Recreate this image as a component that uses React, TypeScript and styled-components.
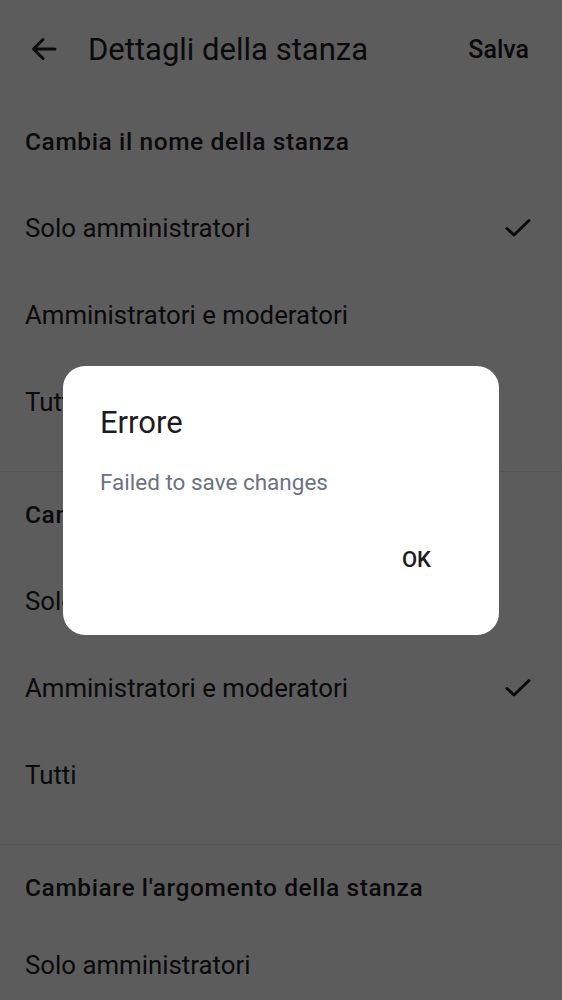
import React from "react";
import styled, { createGlobalStyle } from "styled-components";

const Global = createGlobalStyle`
  html, body { margin: 0; padding: 0; background: #ffffff; }
  body { font-family: Roboto, "Noto Sans", "Liberation Sans", sans-serif; color: #1d1b20; }
  * { box-sizing: border-box; }
`;

const Page = styled.div`
  width: 562px;
  height: 1000px;
  overflow: hidden;
  background: #ffffff;
  display: flex;
  flex-direction: column;
`;

const Header = styled.header`
  height: 98px;
  flex: none;
  display: flex;
  align-items: center;
  padding: 0 33px 0 30px;
`;

const BackButton = styled.button`
  border: 0;
  background: none;
  padding: 0;
  width: 28px;
  height: 28px;
  display: flex;
  align-items: center;
  justify-content: center;
  color: #1d1b20;
  margin-right: 30px;
`;

const Title = styled.h1`
  margin: 0;
  flex: 1;
  font-size: 31px;
  font-weight: 400;
  line-height: 1;
  color: #1d1b20;
`;

const SaveButton = styled.span`
  font-size: 25px;
  font-weight: 500;
  color: #1d1b20;
`;

const Section = styled.section<{ $last?: boolean }>`
  display: flex;
  flex-direction: column;
  padding-bottom: ${(p) => (p.$last ? 0 : 26)}px;
  border-bottom: ${(p) => (p.$last ? "none" : "1px solid #e9e9e9")};
`;

const SectionTitle = styled.div<{ $h: number; $top: number }>`
  height: ${(p) => p.$h}px;
  display: flex;
  align-items: center;
  padding: ${(p) => p.$top}px 25px 0;
  font-size: 24.5px;
  font-weight: 500;
  letter-spacing: 0.6px;
  color: #1d1b20;
`;

const Row = styled.div`
  height: 87px;
  display: flex;
  align-items: center;
  justify-content: space-between;
  padding: 0 31px 0 25px;
  font-size: 25.8px;
  font-weight: 400;
  color: #1d1b20;
`;

const Scrim = styled.div`
  position: fixed;
  inset: 0;
  background: rgba(0, 0, 0, 0.64);
  display: flex;
  align-items: center;
  justify-content: center;
`;

const Dialog = styled.div`
  width: 436px;
  height: 269px;
  background: #ffffff;
  border-radius: 22px;
  padding: 38px 37px 0 37px;
  display: flex;
  flex-direction: column;
`;

const DialogTitle = styled.h2`
  margin: 0;
  font-size: 31px;
  font-weight: 400;
  line-height: 37px;
  color: #1d1b20;
`;

const DialogText = styled.p`
  margin: 26px 0 0;
  font-size: 22.5px;
  line-height: 30px;
  color: #6b7280;
`;

const Actions = styled.div`
  display: flex;
  justify-content: flex-end;
  margin-top: 39px;
  margin-right: 15px;
`;

const TextButton = styled.button`
  border: 0;
  background: none;
  height: 48px;
  padding: 0 16px;
  font-family: inherit;
  font-size: 22px;
  font-weight: 500;
  color: #1d1b20;
`;

const BackIcon = () => (
  <svg width="28" height="28" viewBox="0 0 28 28" fill="none">
    <path
      d="M25 14H4.5M13 4.5L3.5 14L13 23.5"
      stroke="currentColor"
      strokeWidth="3"
      strokeLinecap="round"
      strokeLinejoin="round"
    />
  </svg>
);

const Check = () => (
  <svg width="26" height="20" viewBox="0 0 26 20" fill="none">
    <path
      d="M2 10.5L9 17L24 2.5"
      stroke="#1d1b20"
      strokeWidth="3"
      strokeLinecap="round"
      strokeLinejoin="round"
    />
  </svg>
);

type Group = {
  title: string;
  h: number;
  top: number;
  selected: number;
  options: string[];
};

const groups: Group[] = [
  {
    title: "Cambia il nome della stanza",
    h: 86,
    top: 0,
    selected: 0,
    options: ["Solo amministratori", "Amministratori e moderatori", "Tutti"],
  },
  {
    title: "Cambiare l'avatar della stanza",
    h: 85,
    top: 0,
    selected: 1,
    options: ["Solo amministratori", "Amministratori e moderatori", "Tutti"],
  },
  {
    title: "Cambiare l'argomento della stanza",
    h: 76,
    top: 8,
    selected: -1,
    options: ["Solo amministratori"],
  },
];

export default function App() {
  return (
    <>
      <Global />
      <Page>
        <Header>
          <BackButton aria-label="Indietro">
            <BackIcon />
          </BackButton>
          <Title>Dettagli della stanza</Title>
          <SaveButton>Salva</SaveButton>
        </Header>
        {groups.map((g, gi) => (
          <Section key={g.title} $last={gi === groups.length - 1}>
            <SectionTitle $h={g.h} $top={g.top}>
              {g.title}
            </SectionTitle>
            {g.options.map((o, i) => (
              <Row key={o}>
                <span>{o}</span>
                {i === g.selected && <Check />}
              </Row>
            ))}
          </Section>
        ))}
      </Page>
      <Scrim>
        <Dialog role="alertdialog">
          <DialogTitle>Errore</DialogTitle>
          <DialogText>Failed to save changes</DialogText>
          <Actions>
            <TextButton>OK</TextButton>
          </Actions>
        </Dialog>
      </Scrim>
    </>
  );
}
